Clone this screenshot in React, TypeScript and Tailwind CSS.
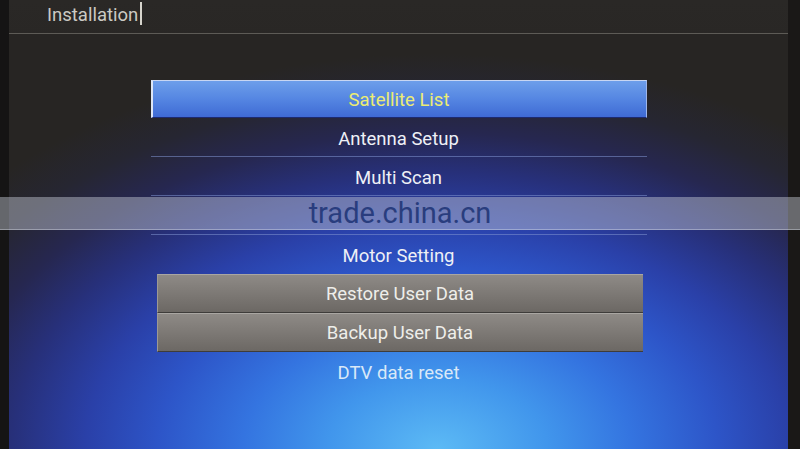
import React from "react";

const font = { fontFamily: "Roboto, 'Noto Sans', Arial, sans-serif" };

function Plain({ label, line, dim }: { label: string; line?: boolean; dim?: boolean }) {
  return (
    <div
      className={
        "h-[39px] pt-[6px] flex items-center justify-center text-[18.5px] " +
        (line ? "border-b border-[#8094d0]/55 " : "border-b border-transparent ") +
        (dim ? "text-[#d9e8f8]" : "text-[#eef0f6]")
      }
    >
      {label}
    </div>
  );
}

function Gray({ label }: { label: string }) {
  return (
    <div className="h-[39px] pt-[3px] ml-[6px] mr-[4px] flex items-center justify-center text-[18.5px] text-[#eeeeea] bg-gradient-to-b from-[#8e8a86] via-[#7d7975] to-[#6c6864] border-t border-[#a9a6a2] border-b border-b-[#3e3c3a] border-l border-l-[#9c9994]">
      {label}
    </div>
  );
}

export default function App() {
  return (
    <div
      className="w-[800px] h-[449px] relative overflow-hidden flex bg-[#141313]"
      style={font}
    >
      <div className="w-[9px] bg-[#151414]" />
      <div className="flex-1 flex flex-col bg-[radial-gradient(ellipse_78%_88%_at_55%_100%,#5cbaf5_0%,#4196ec_18%,#3474e0_32%,#2d55c8_46%,#2a40a8_58%,#27307a_70%,#262750_80%,#262632_90%,#272523_100%)]">
        <div className="h-[34px] shrink-0 flex items-center border-b border-[#5d5b56] bg-gradient-to-b from-[#2a2826] to-[#2a2826]/70">
          <span className="ml-[38px] text-[18.5px] text-[#cbcac3] leading-none -mt-[2px]">Installation</span>
          <span className="ml-[2px] w-[2px] h-[23px] bg-[#d6d4cc] -mt-[6px]" />
        </div>
        <div className="w-[496px] mx-auto mt-[46px] flex flex-col">
          <div className="h-[38px] pt-[4px] flex items-center justify-center text-[18.5px] text-[#ecec72] bg-gradient-to-b from-[#6d9eea] via-[#5586e2] to-[#3f6ad4] border-t border-[#c8d6f2] border-l-2 border-l-[#dde6f6] border-r border-r-[#9fb6ea] border-b border-b-[#1c2a70]">
            Satellite List
          </div>
          <Plain label="Antenna Setup" line />
          <Plain label="Multi Scan" line />
          <Plain label="" line />
          <Plain label="Motor Setting" />
          <Gray label="Restore User Data" />
          <Gray label="Backup User Data" />
          <Plain label="DTV data reset" dim />
        </div>
      </div>
      <div className="w-[12px] bg-[#1a1817]" />
      <div className="absolute left-0 right-0 top-[197px] h-[33px] bg-[#c8ccd8]/45 border-b border-[#dfe3ee]/40 flex items-center justify-center">
        <span className="text-[29px] text-[#293d7e] leading-none">trade.china.cn</span>
      </div>
    </div>
  );
}
